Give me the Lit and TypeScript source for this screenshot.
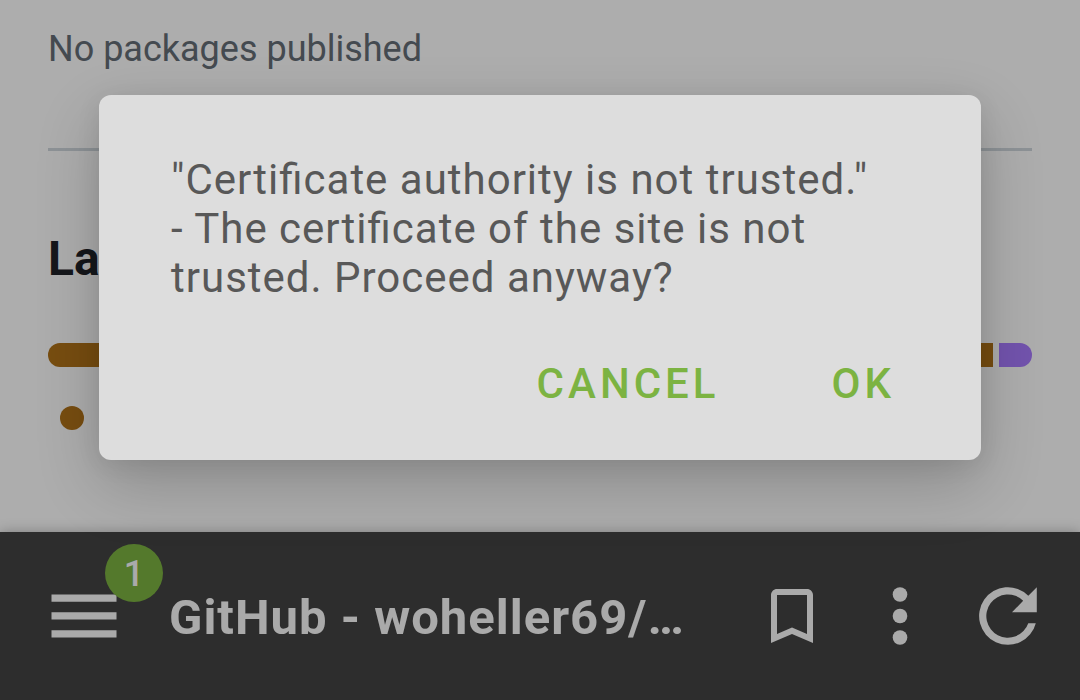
import { LitElement, html, css } from "lit";
import { customElement, state } from "lit/decorators.js";

const LANGUAGES = [
  { name: "Java", color: "#b07219", share: 96.6 },
  { name: "Kotlin", color: "#a97bff", share: 3.4 },
];

@customElement("repo-page")
class RepoPage extends LitElement {
  static styles = css`
    :host {
      display: block;
      flex: 1;
      min-height: 0;
      overflow: hidden;
      background: #ffffff;
      color: #1f2328;
      padding: 25px 48px 0;
      box-sizing: border-box;
    }
    .note {
      margin: 0;
      font-size: 36px;
      line-height: 48px;
      color: #656d76;
    }
    .rule {
      margin: 75px 0 84px;
      border: 0;
      border-top: 3px solid #d0d7de;
    }
    .heading {
      margin: 0;
      font-size: 48px;
      line-height: 48px;
      font-weight: 700;
    }
    .bar {
      display: flex;
      gap: 6px;
      height: 24px;
      margin-top: 60px;
      border-radius: 12px;
      overflow: hidden;
    }
    .legend {
      display: flex;
      margin: 39px 0 0;
      padding: 0 12px;
      list-style: none;
    }
    .dot {
      width: 24px;
      height: 24px;
      border-radius: 50%;
    }
  `;

  render() {
    return html`
      <p class="note">No packages published</p>
      <hr class="rule" />
      <h2 class="heading">La</h2>
      <div class="bar">
        ${LANGUAGES.map(
          (l) => html`<span style="flex: ${l.share} 1 0; background: ${l.color}"></span>`
        )}
      </div>
      <ul class="legend">
        <li class="dot" style="background: ${LANGUAGES[0].color}"></li>
      </ul>
    `;
  }
}

@customElement("bottom-bar")
class BottomBar extends LitElement {
  static styles = css`
    :host {
      display: flex;
      align-items: center;
      box-sizing: border-box;
      height: 168px;
      padding: 0 36px 0 48px;
      background: #434343;
      color: #fbfbfb;
      box-shadow: 0 0 12px rgba(0, 0, 0, 0.28);
      position: relative;
    }
    button {
      display: flex;
      align-items: center;
      justify-content: center;
      flex: none;
      width: 72px;
      height: 72px;
      padding: 0;
      border: 0;
      background: none;
      color: inherit;
      font: inherit;
      position: relative;
    }
    svg {
      display: block;
      fill: currentColor;
    }
    .badge {
      position: absolute;
      left: 57px;
      bottom: 50px;
      width: 58px;
      height: 58px;
      border-radius: 50%;
      background: #7cb342;
      font-size: 36px;
      line-height: 60px;
      font-weight: 500;
      text-align: center;
    }
    .title {
      flex: 1;
      min-width: 0;
      padding: 4px 0 0 49px;
      font-size: 49px;
      line-height: 56px;
      font-weight: 700;
      letter-spacing: 1px;
      white-space: nowrap;
    }
    .actions {
      display: flex;
      gap: 36px;
    }
  `;

  render() {
    return html`
      <button aria-label="Open tabs">
        <svg width="72" height="72" viewBox="0 0 72 72">
          <path d="M3.500 14.500h65v7.300h-65zM3.500 32.300h65v7.300h-65zM3.500 50.200h65v7.300h-65z" />
        </svg>
        <span class="badge">1</span>
      </button>
      <span class="title">GitHub - woheller69/…</span>
      <div class="actions">
        <button aria-label="Bookmarks">
          <svg width="72" height="72" viewBox="0 0 24 24">
            <path d="M17 3H7c-1.100 0-2 .9-2 2v16l7-3 7 3V5c0-1.100-.9-2-2-2zm0 15l-5-2.180L7 18V5h10v13z" />
          </svg>
        </button>
        <button aria-label="More">
          <svg width="72" height="72" viewBox="0 0 72 72">
            <circle cx="36" cy="14.500" r="7.300" />
            <circle cx="36" cy="36" r="7.300" />
            <circle cx="36" cy="57.500" r="7.300" />
          </svg>
        </button>
        <button aria-label="Reload">
          <svg width="72" height="72" viewBox="0 0 72 72">
            <path
              d="M56.300 15.700A28.800 28.800 0 1 0 63.800 43.200H56.300A21.600 21.600 0 1 1 51.200 20.800L40 32.200H64.800V7.200Z"
            />
          </svg>
        </button>
      </div>
    `;
  }
}

@customElement("trust-dialog")
class TrustDialog extends LitElement {
  static styles = css`
    :host {
      position: absolute;
      inset: 0;
      display: flex;
      align-items: flex-start;
      padding: 95px 99px 0;
      background: rgba(0, 0, 0, 0.32);
    }
    .panel {
      flex: 1;
      box-sizing: border-box;
      padding: 60px 48px 40px 72px;
      border-radius: 12px;
      background: #dddddd;
      box-shadow: 0 24px 64px rgba(0, 0, 0, 0.2), 0 4px 24px rgba(0, 0, 0, 0.08);
    }
    .message {
      margin: 0;
      font-size: 42px;
      line-height: 49px;
      letter-spacing: 1px;
      font-feature-settings: "liga" 1;
      color: #585858;
    }
    .buttons {
      display: flex;
      justify-content: flex-end;
      gap: 36px;
      margin-top: 46px;
    }
    button {
      padding: 0 38px;
      border: 0;
      background: none;
      color: #7cb342;
      font: 500 42px/72px Roboto, sans-serif;
      letter-spacing: 4px;
    }
  `;

  private close() {
    this.dispatchEvent(new CustomEvent("dismiss"));
  }

  render() {
    return html`
      <div class="panel" role="alertdialog" aria-modal="true" aria-describedby="message">
        <p class="message" id="message">
          "Certificate authority is not trusted."<br />- The certificate of the site is not
          trusted. Proceed anyway?
        </p>
        <div class="buttons">
          <button @click=${this.close}>CANCEL</button>
          <button @click=${this.close}>OK</button>
        </div>
      </div>
    `;
  }
}

@customElement("app-root")
class AppRoot extends LitElement {
  @state() private asking = true;

  static styles = css`
    :host {
      display: flex;
      flex-direction: column;
      position: relative;
      height: 100vh;
      overflow: hidden;
      font-family: Roboto, sans-serif;
    }
  `;

  render() {
    return html`
      <repo-page></repo-page>
      <bottom-bar></bottom-bar>
      ${this.asking
        ? html`<trust-dialog @dismiss=${() => (this.asking = false)}></trust-dialog>`
        : null}
    `;
  }
}
